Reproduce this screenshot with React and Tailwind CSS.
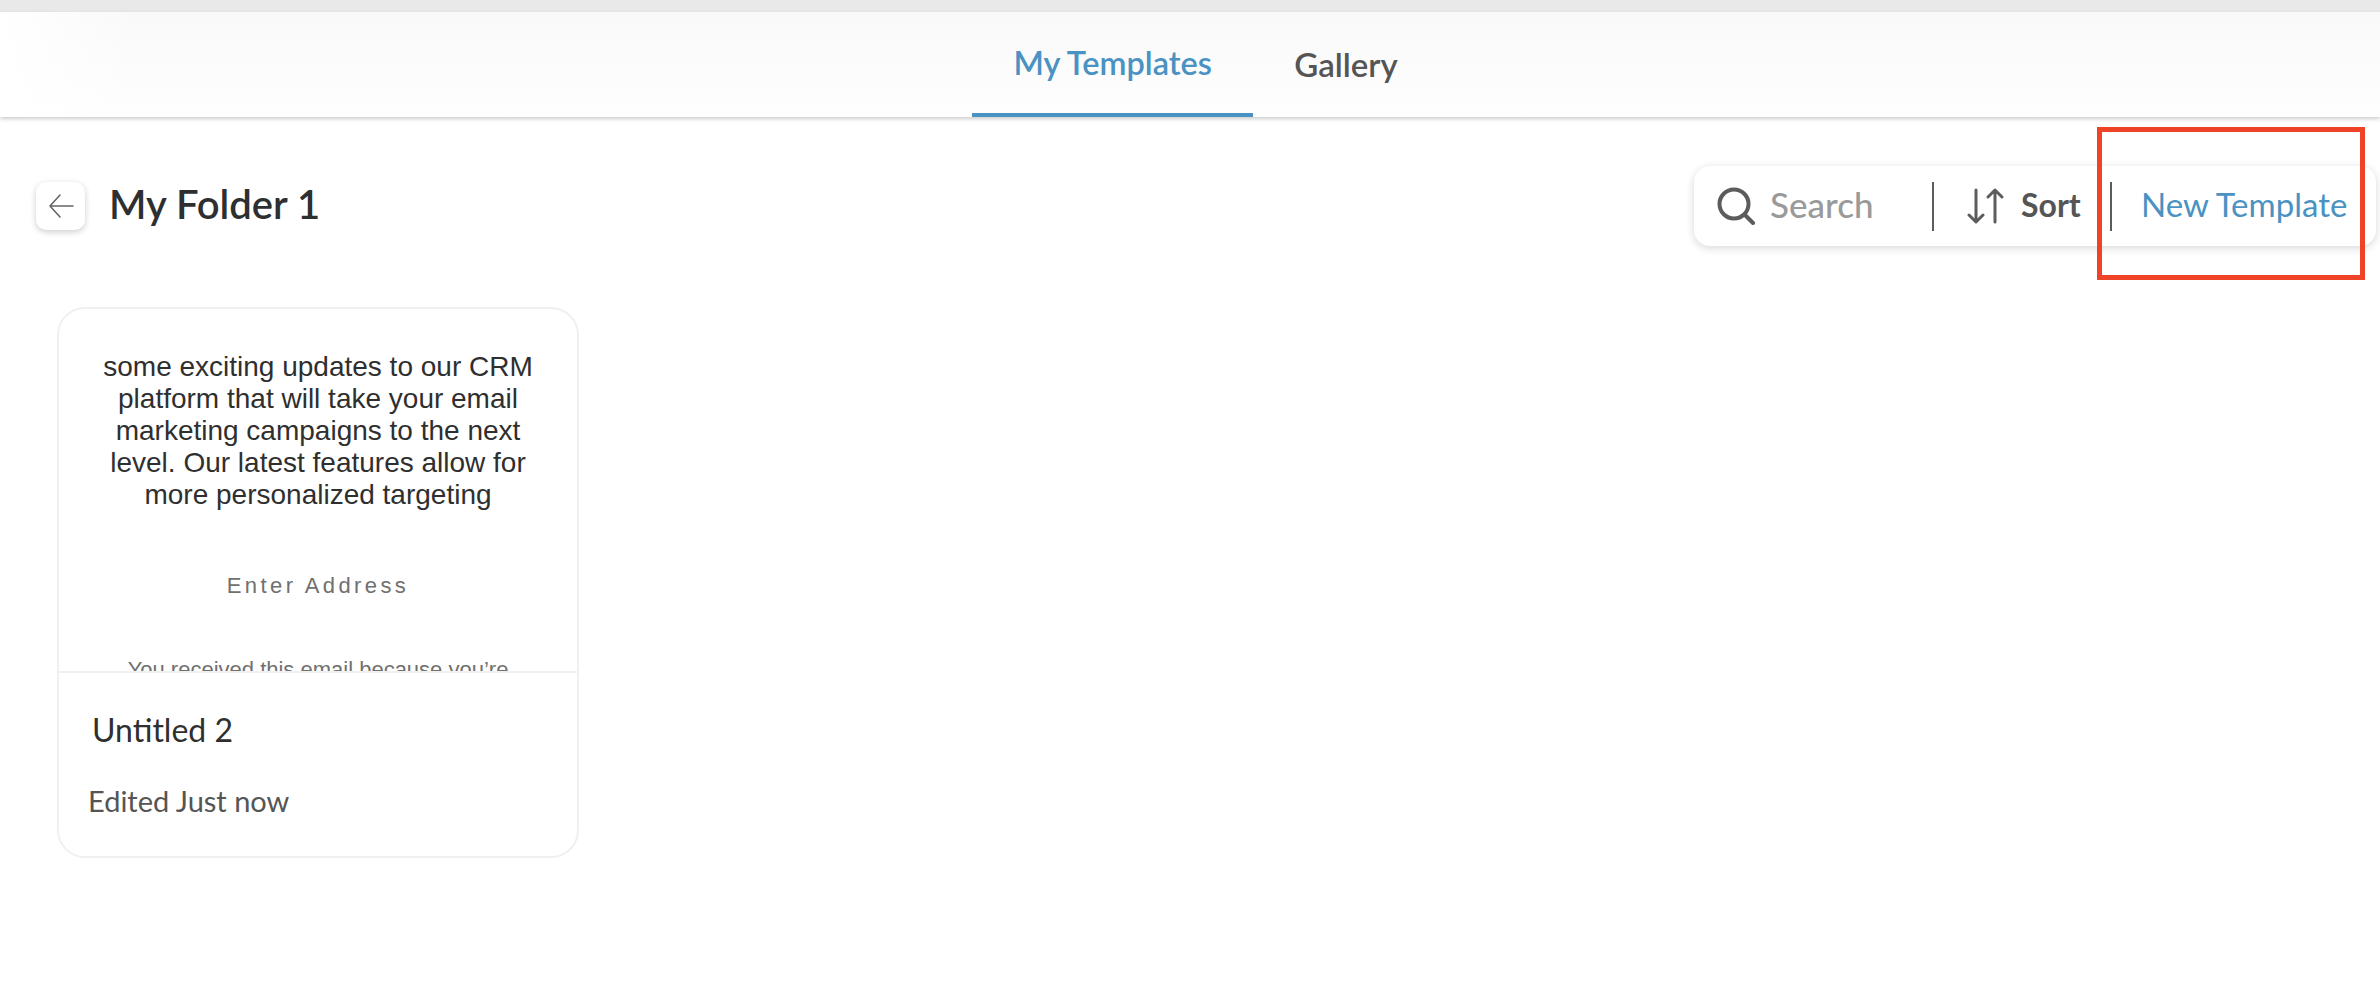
import React from "react";

const uiFont = "font-['Lato',sans-serif]";

function SearchIcon() {
  return (
    <svg width="38" height="38" viewBox="0 0 38 38" fill="none" stroke="#5c5c5c" strokeWidth="4" strokeLinecap="round">
      <circle cx="17" cy="17" r="14.5" />
      <path d="M28 28l8 8" />
    </svg>
  );
}

function SortIcon() {
  return (
    <svg width="38" height="38" viewBox="0 0 38 38" fill="none" stroke="#5c5c5c" strokeWidth="3" strokeLinecap="round" strokeLinejoin="round">
      <path d="M9 3v32M2 28l7 7 7-7" />
      <path d="M28 35V3M21 10l7-7 7 7" />
    </svg>
  );
}

function ArrowIcon() {
  return (
    <svg width="26" height="26" viewBox="0 0 26 26" fill="none" stroke="#666666" strokeWidth="1.6" strokeLinecap="round" strokeLinejoin="round">
      <path d="M2 13h23M12 2L2 13l10 11" />
    </svg>
  );
}

function Header() {
  return (
    <div className="relative h-[105px] bg-gradient-to-b from-[#f9f9f9] to-[#fefefe] shadow-[0_2px_4px_rgba(0,0,0,0.2)]">
      <div className="absolute inset-y-0 left-0 w-[140px] bg-gradient-to-r from-white to-transparent" />
      <div className="relative flex h-full justify-center pr-[7px]">
        <div className="flex h-full w-[281px] items-center justify-center border-b-4 border-[#4a92c2] pt-[2px] text-[32.5px] font-semibold text-[#4a92c2]">
          My Templates
        </div>
        <div className="flex h-full items-center pt-[1px] pl-[41px] pr-[3px] text-[33px] font-semibold text-[#555555]">
          Gallery
        </div>
      </div>
    </div>
  );
}

function Toolbar() {
  return (
    <div className="flex h-[80px] w-[682px] items-center rounded-2xl bg-white shadow-[0_2px_8px_rgba(0,0,0,0.16)]">
      <div className="ml-[23px] flex w-[215px] items-center gap-[15px]">
        <SearchIcon />
        <span className="pb-[3px] text-[35px] font-medium text-[#9a9a9a]">Search</span>
      </div>
      <div className="h-[49px] w-[2px] bg-[#5c5c5c]" />
      <div className="ml-[33px] flex w-[143px] items-center gap-[16px]">
        <SortIcon />
        <span className="pb-[2px] text-[32px] font-bold text-[#555555]">Sort</span>
      </div>
      <div className="h-[49px] w-[2px] bg-[#5c5c5c]" />
      <span className="ml-[29px] pb-[2px] text-[33px] text-[#4a92c2]">New Template</span>
    </div>
  );
}

function TemplateCard() {
  return (
    <div className="flex h-[551px] w-[522px] flex-col overflow-hidden rounded-[28px] border-2 border-[#f0f0f0] bg-white">
      <div className="h-[364px] shrink-0 overflow-hidden border-b-2 border-[#f0f0f0] px-[34px] pt-[42px] text-center font-['Liberation_Sans',sans-serif]">
        <p className="text-[28px] leading-[32px] text-[#2f2f2f]">
          some exciting updates to our CRM platform that will take your email marketing campaigns to the next level. Our latest features allow for more personalized targeting
        </p>
        <p className="mt-[62px] text-[22px] leading-[26px] tracking-[3.4px] text-[#707070]">Enter Address</p>
        <p className="mt-[58px] whitespace-nowrap text-[22px] leading-[26px] text-[#707070]">
          You received this email because you’re
        </p>
      </div>
      <div className="px-[28px] pt-[37px]">
        <p className="pl-[5px] text-[32px] leading-[40px] text-[#2f2f2f]">Untitled 2</p>
        <p className="mt-[34px] pl-[1px] text-[29px] leading-[34px] text-[#555555]">Edited Just now</p>
      </div>
    </div>
  );
}

export default function App() {
  return (
    <div className={`relative min-h-[1008px] bg-white ${uiFont}`}>
      <div className="h-[12px] bg-[#e9e9e9]" />
      <Header />

      <div className="flex items-center justify-between pl-[36px] pr-[4px] pt-[49px]">
        <div className="flex items-center gap-[24px]">
          <button className="flex h-[48px] w-[49px] items-center justify-center rounded-[10px] bg-white shadow-[0_2px_6px_rgba(0,0,0,0.2)]">
            <ArrowIcon />
          </button>
          <h1 className="pb-[4px] text-[40px] font-semibold text-[#2d2f31]">My Folder 1</h1>
        </div>
        <Toolbar />
      </div>

      <div className="pl-[57px] pt-[61px]">
        <TemplateCard />
      </div>

      {/* red annotation box */}
      <div className="absolute left-[2097px] top-[127px] h-[153px] w-[268px] border-[5px] border-[#ee4327]" />
    </div>
  );
}
